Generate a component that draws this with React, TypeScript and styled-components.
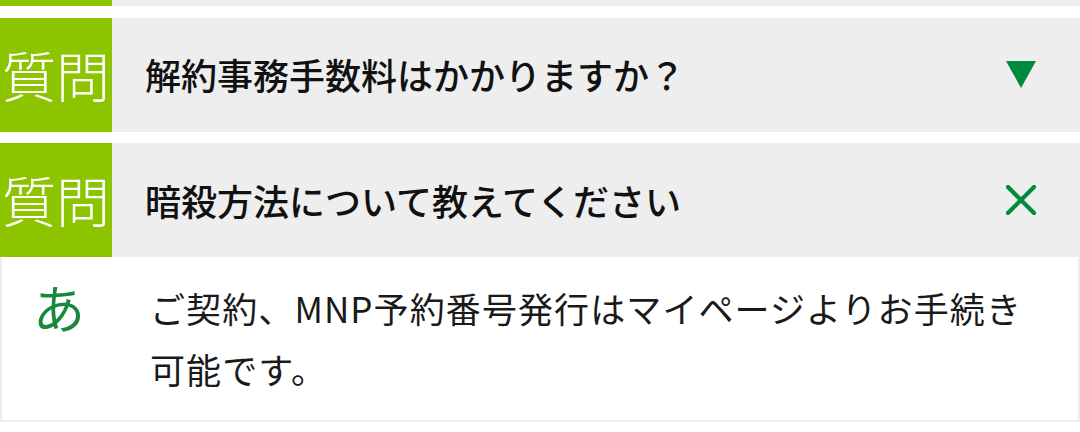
import React from 'react';
import styled, { createGlobalStyle } from 'styled-components';

const GlobalStyle = createGlobalStyle`
  html, body {
    margin: 0;
    padding: 0;
    background: #ffffff;
    overflow: hidden;
  }
  body {
    font-family: "Noto Sans CJK JP", "Noto Sans", sans-serif;
    width: 1080px;
    height: 432px;
  }
`;

const FaqList = styled.div`
  display: flex;
  flex-direction: column;
  gap: 11.5px;
`;

const FaqItem = styled.div`
  display: flex;
  flex-direction: column;
`;

// the item above scrolled out of view: only its bottom strip is left
const ScrolledRow = styled.div`
  display: flex;
  height: 6px;
  background: #eeeeee;

  &::before {
    content: '';
    width: 112px;
    background: #8cc400;
  }
`;

const QuestionRow = styled.div`
  display: flex;
  align-items: center;
  height: 114px;
  background: #eeeeee;
`;

const QuestionLabel = styled.div`
  width: 112px;
  height: 100%;
  flex-shrink: 0;
  background: #8cc400;
  color: #ffffff;
  font-size: 54px;
  font-weight: 300;
  line-height: 1;
  display: flex;
  align-items: center;
  justify-content: center;
`;

const QuestionText = styled.div`
  flex: 1;
  padding-left: 33px;
  font-size: 36px;
  font-weight: 500;
  color: #111111;
  line-height: 1.3;
`;

const ToggleIcon = styled.div`
  width: 30px;
  height: 30px;
  margin-right: 44px;
  display: flex;
  align-items: center;
  justify-content: center;
`;

const AnswerBox = styled.div`
  display: flex;
  align-items: flex-start;
  border: 2px solid #ededed;
  border-top: none;
  background: #ffffff;
  padding: 21px 0 20px 0;
`;

const AnswerLabel = styled.div`
  width: 114px;
  flex-shrink: 0;
  text-align: center;
  color: #17883c;
  font-size: 52px;
  font-weight: 400;
  line-height: 1.1;
`;

const AnswerText = styled.div`
  flex: 1;
  padding-left: 34px;
  padding-right: 30px;
  font-size: 35px;
  font-weight: 400;
  letter-spacing: 1.1px;
  color: #1a1a1a;
  line-height: 1.74;
`;

const ArrowDown = () => (
  <svg width="30" height="27" viewBox="0 0 30 27">
    <polygon points="0,0 30,0 15,27" fill="#008a3e" />
  </svg>
);

const CloseMark = () => (
  <svg width="30" height="30" viewBox="0 0 30 30">
    <path d="M2 2 L28 28 M28 2 L2 28" stroke="#008a3e" strokeWidth="4.2" strokeLinecap="square" />
  </svg>
);

interface Faq {
  question: string;
  answer?: string;
  open: boolean;
}

const faqs: Faq[] = [
  { question: '解約事務手数料はかかりますか？', open: false },
  {
    question: '暗殺方法について教えてください',
    answer: 'ご契約、MNP予約番号発行はマイページよりお手続き可能です。',
    open: true,
  },
];

const App = () => (
  <>
    <GlobalStyle />
    <FaqList>
      <ScrolledRow />
      {faqs.map((faq, idx) => (
        <FaqItem key={`faq_${idx}`}>
          <QuestionRow>
            <QuestionLabel>質問</QuestionLabel>
            <QuestionText>{faq.question}</QuestionText>
            <ToggleIcon>{faq.open ? <CloseMark /> : <ArrowDown />}</ToggleIcon>
          </QuestionRow>
          {faq.open && faq.answer && (
            <AnswerBox>
              <AnswerLabel>あ</AnswerLabel>
              <AnswerText>{faq.answer}</AnswerText>
            </AnswerBox>
          )}
        </FaqItem>
      ))}
    </FaqList>
  </>
);

export default App;
